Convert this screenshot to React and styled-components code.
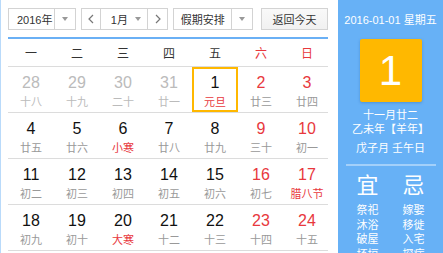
import React from "react";
import styled, { createGlobalStyle } from "styled-components";

const Global = createGlobalStyle`
  html, body { margin: 0; padding: 0; background: #fff; }
  body { font-family: Arial, "Liberation Sans", "Noto Sans CJK SC", sans-serif; }
`;

const FONT = `Arial, "Liberation Sans", "Noto Sans CJK SC", sans-serif`;
const RED = "#e8383d";
const YELLOW = "#ffb800";

const Widget = styled.div`
  display: flex;
  width: 443px;
  height: 253px;
  overflow: hidden;
  font-family: ${FONT};
`;

const Main = styled.div`
  width: 338px;
  box-sizing: border-box;
  border-left: 1px solid #b9dafa;
  padding: 8px 10px 0 7px;
  flex: none;
`;

const Toolbar = styled.div`
  display: flex;
  align-items: center;
  height: 22px;
  width: 320px;
`;

const Box = styled.div`
  display: flex;
  align-items: stretch;
  height: 22px;
  box-sizing: border-box;
  border: 1px solid #d3d3d3;
  background: #fff;
  margin-left: ${(p) => p.$ml || 0}px;
  width: ${(p) => p.$w}px;
  font-size: 11px;
  color: #333;
  white-space: nowrap;
`;

const BoxText = styled.div`
  flex: 1;
  display: flex;
  align-items: center;
  justify-content: ${(p) => (p.$center ? "center" : "flex-start")};
  padding-left: ${(p) => p.$pl || 0}px;
`;

const Arrow = styled.div`
  width: ${(p) => p.$w || 20}px;
  flex: none;
  display: flex;
  align-items: center;
  justify-content: center;
  border-left: ${(p) => (p.$sep ? "1px solid #d3d3d3" : "none")};
  border-right: ${(p) => (p.$sepR ? "1px solid #d3d3d3" : "none")};
`;

const Caret = styled.span`
  width: 0;
  height: 0;
  border-left: 3px solid transparent;
  border-right: 3px solid transparent;
  border-top: 4px solid #999;
`;

const TodayBtn = styled.div`
  margin-left: 8px;
  width: 67px;
  height: 22px;
  box-sizing: border-box;
  border: 1px solid #d3d3d3;
  background: linear-gradient(#f9f9f9, #f1f1f1);
  font-size: 11px;
  color: #333;
  display: flex;
  align-items: center;
  justify-content: center;
  white-space: nowrap;
`;

const Header = styled.div`
  margin-top: 7px;
  width: 320px;
  border-top: 2px solid #6ab0f5;
  border-bottom: 1px solid #dcdcdc;
  height: 27px;
  display: grid;
  grid-template-columns: repeat(7, 46px);
  align-items: center;
`;

const WeekDay = styled.div`
  text-align: center;
  font-size: 12px;
  color: ${(p) => (p.$red ? RED : "#333")};
`;

const Row = styled.div`
  width: 320px;
  height: 45px;
  border-bottom: 1px solid #dcdcdc;
  display: grid;
  grid-template-columns: repeat(7, 46px);
`;

const Cell = styled.div`
  box-sizing: border-box;
  height: 45px;
  border: 2px solid ${(p) => (p.$sel ? YELLOW : "transparent")};
  display: flex;
  flex-direction: column;
  align-items: center;
  padding-top: 5px;
`;

const Num = styled.div`
  font-family: Arial, "Liberation Sans", sans-serif;
  font-size: 16px;
  line-height: 18px;
  color: ${(p) => p.$c};
`;

const Lunar = styled.div`
  font-size: 11px;
  line-height: 14px;
  margin-top: 3px;
  white-space: nowrap;
  color: ${(p) => (p.$red ? RED : p.$dim ? "#bbb" : "#999")};
`;

const Side = styled.div`
  width: 105px;
  flex: none;
  background: #67b1f6;
  color: #fff;
  display: flex;
  flex-direction: column;
  align-items: center;
`;

const SideDate = styled.div`
  flex: none;
  margin-top: 13px;
  font-size: 11px;
  line-height: 14px;
  white-space: nowrap;
`;

const BigDay = styled.div`
  flex: none;
  margin-top: 12px;
  width: 62px;
  height: 63px;
  background: ${YELLOW};
  border-radius: 2px;
  box-shadow: 0 1px 3px rgba(0, 60, 120, 0.25);
  display: flex;
  align-items: center;
  justify-content: center;
  font-family: Arial, "Liberation Sans", sans-serif;
  font-size: 42px;
  line-height: 63px;
  color: #fff;
`;

const SideLine = styled.div`
  flex: none;
  font-size: 11px;
  line-height: 14px;
  margin-top: ${(p) => p.$mt}px;
  white-space: nowrap;
`;

const Divider = styled.div`
  flex: none;
  margin-top: 9px;
  width: 90px;
  height: 2px;
  background: #a3d0fa;
`;

const YiJi = styled.div`
  flex: none;
  display: flex;
  gap: 22px;
  margin-top: 7px;
`;

const YiCol = styled.div`
  display: flex;
  flex-direction: column;
  align-items: center;
  width: 24px;
`;

const YiTitle = styled.div`
  font-size: 22px;
  line-height: 26px;
  margin-bottom: 4px;
`;

const YiItem = styled.div`
  font-size: 11px;
  line-height: 14.5px;
  white-space: nowrap;
`;

const weeks = ["一", "二", "三", "四", "五", "六", "日"];

const rows = [
  [
    ["28", "十八", "prev"],
    ["29", "十九", "prev"],
    ["30", "二十", "prev"],
    ["31", "廿一", "prev"],
    ["1", "元旦", "sel", true],
    ["2", "廿三", "we"],
    ["3", "廿四", "we"],
  ],
  [
    ["4", "廿五"],
    ["5", "廿六"],
    ["6", "小寒", "", true],
    ["7", "廿八"],
    ["8", "廿九"],
    ["9", "三十", "we"],
    ["10", "初一", "we"],
  ],
  [
    ["11", "初二"],
    ["12", "初三"],
    ["13", "初四"],
    ["14", "初五"],
    ["15", "初六"],
    ["16", "初七", "we"],
    ["17", "腊八节", "we", true],
  ],
  [
    ["18", "初九"],
    ["19", "初十"],
    ["20", "大寒", "", true],
    ["21", "十二"],
    ["22", "十三"],
    ["23", "十四", "we"],
    ["24", "十五", "we"],
  ],
];

export default function App() {
  return (
    <>
      <Global />
      <Widget>
        <Main>
          <Toolbar>
            <Box $w={68}>
              <BoxText $pl={8}>2016年</BoxText>
              <Arrow $sep $w={20}>
                <Caret />
              </Arrow>
            </Box>
            <Box $w={88} $ml={5}>
              <Arrow $sepR $w={18}>
                <svg width="6" height="10" viewBox="0 0 6 10">
                  <path d="M5 1 L1 5 L5 9" fill="none" stroke="#777" strokeWidth="1.2" />
                </svg>
              </Arrow>
              <BoxText $pl={10}>1月</BoxText>
              <Arrow $w={18}>
                <Caret />
              </Arrow>
              <Arrow $sep $w={19}>
                <svg width="6" height="10" viewBox="0 0 6 10">
                  <path d="M1 1 L5 5 L1 9" fill="none" stroke="#777" strokeWidth="1.2" />
                </svg>
              </Arrow>
            </Box>
            <Box $w={80} $ml={5}>
              <BoxText $center>假期安排</BoxText>
              <Arrow $sep $w={20}>
                <Caret />
              </Arrow>
            </Box>
            <TodayBtn>返回今天</TodayBtn>
          </Toolbar>
          <Header>
            {weeks.map((w, i) => (
              <WeekDay key={w} $red={i >= 5}>
                {w}
              </WeekDay>
            ))}
          </Header>
          {rows.map((r, ri) => (
            <Row key={ri}>
              {r.map(([n, l, kind, hol]) => {
                const c =
                  kind === "prev" ? "#bbb" : kind === "we" ? RED : "#111";
                return (
                  <Cell key={n} $sel={kind === "sel"}>
                    <Num $c={c}>{n}</Num>
                    <Lunar $red={hol} $dim={kind === "prev"}>
                      {l}
                    </Lunar>
                  </Cell>
                );
              })}
            </Row>
          ))}
        </Main>
        <Side>
          <SideDate>2016-01-01 星期五</SideDate>
          <BigDay>1</BigDay>
          <SideLine $mt={6}>十一月廿二</SideLine>
          <SideLine $mt={0}>乙未年【羊年】</SideLine>
          <SideLine $mt={5}>戊子月 壬午日</SideLine>
          <Divider />
          <YiJi>
            <YiCol>
              <YiTitle>宜</YiTitle>
              <YiItem>祭祀</YiItem>
              <YiItem>沐浴</YiItem>
              <YiItem>破屋</YiItem>
              <YiItem>坏垣</YiItem>
            </YiCol>
            <YiCol>
              <YiTitle>忌</YiTitle>
              <YiItem>嫁娶</YiItem>
              <YiItem>移徙</YiItem>
              <YiItem>入宅</YiItem>
              <YiItem>探病</YiItem>
            </YiCol>
          </YiJi>
        </Side>
      </Widget>
    </>
  );
}
